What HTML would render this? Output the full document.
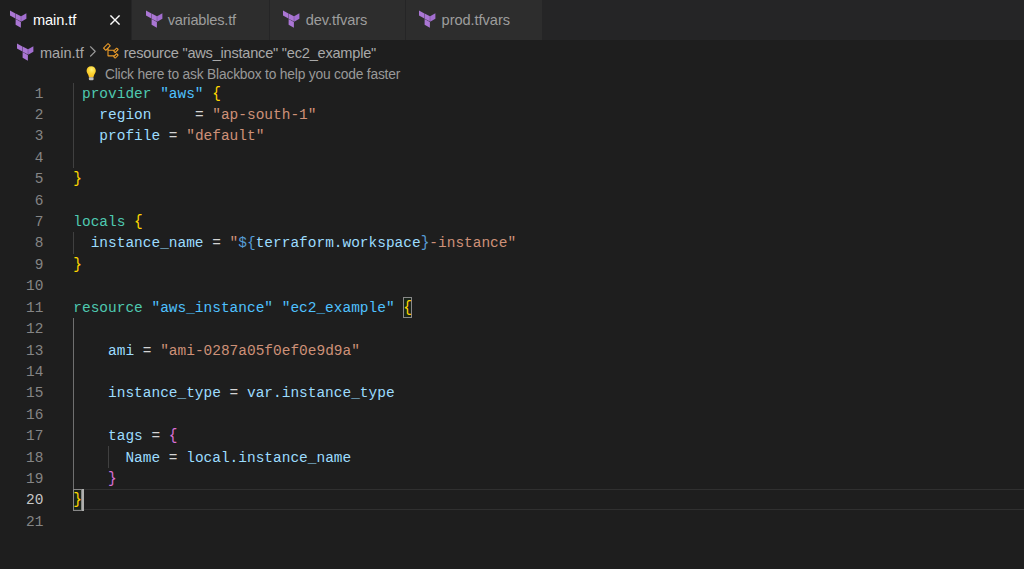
<!DOCTYPE html>
<html><head><meta charset="utf-8"><title>main.tf</title>
<style>
html,body{margin:0;padding:0;background:#1e1e1e;overflow:hidden}
body{width:1024px;height:569px;position:relative;font-family:"Liberation Sans",sans-serif;color:#ccc}
svg{position:absolute;overflow:visible}
.tabs{position:absolute;left:0;top:0;width:1024px;height:39.6px;background:#252526}
.tab{position:absolute;top:0;height:39.6px;background:#2d2d2d}
.tab.active{background:#1e1e1e}
.ui{position:absolute;white-space:nowrap;font-size:14.6px;line-height:20px;height:20px}
.tl{color:#9d9d9d;top:10px}
.tl.on{color:#fff}
.bc{color:#a9a9a9;top:42.5px}
.lens{color:#999;top:64.7px;font-size:13.8px;letter-spacing:-0.2px}
.code{position:absolute;left:0;top:0;width:1024px;font-family:"Liberation Mono",monospace;font-size:14.47px;color:#d4d4d4}
.ln{position:absolute;left:0;height:21.4px;line-height:21.4px;width:1024px;white-space:pre}
.ln .n{position:absolute;left:0;top:0;width:43.4px;text-align:right;color:#858585}
.ln.cur .n{color:#c6c6c6}
.ln .t{position:absolute;left:73.3px;top:0}
.k{color:#4ec9b0}.s{color:#ce9178}.b{color:#4fc1ff}.v{color:#9cdcfe}.y{color:#ffd700}.m{color:#da70d6}.o{color:#d4d4d4}.bl{color:#569cd6}
.br{display:inline-block;transform:translateY(0.2px) scaleY(1.2);transform-origin:50% 60%}
.g{position:absolute;width:1px;background:#404040}
.g.a{background:#707070}
.curline{position:absolute;left:73px;top:489px;width:951px;height:19.4px;border-top:1px solid #303030;border-bottom:1px solid #303030}
.bm{position:absolute;box-sizing:border-box;border:1px solid #888;background:rgba(0,100,0,0.1);width:9.2px;height:21.2px}
.cursor{position:absolute;left:81.5px;top:488.8px;width:2.4px;height:21.8px;background:#aeafad}
</style></head><body>
<div class="tabs">
<div class="tab active" style="left:0;width:131px"></div>
<div class="tab" style="left:132px;width:137px"></div>
<div class="tab" style="left:270px;width:134.5px"></div>
<div class="tab" style="left:405.5px;width:136.4px"></div>
</div>
<svg class="tf" style="left:10px;top:10px" width="18" height="19" viewBox="0 0 18 19"><polygon points="0,0.5 5.4,3.4 5.4,8.5 0,5.5" fill="#aa76d4"/><polygon points="5.6,3.5 10.9,6.3 10.9,11.5 5.6,8.7" fill="#aa76d4"/><polygon points="11.1,6.3 16.4,3.3 16.4,8.8 11.1,11.7" fill="#a26ed0"/><polygon points="5.6,9 10.9,12 10.9,17.8 5.6,14.8" fill="#aa76d4"/></svg><svg class="tf" style="left:145.5px;top:10px" width="18" height="19" viewBox="0 0 18 19"><polygon points="0,0.5 5.4,3.4 5.4,8.5 0,5.5" fill="#aa76d4"/><polygon points="5.6,3.5 10.9,6.3 10.9,11.5 5.6,8.7" fill="#aa76d4"/><polygon points="11.1,6.3 16.4,3.3 16.4,8.8 11.1,11.7" fill="#a26ed0"/><polygon points="5.6,9 10.9,12 10.9,17.8 5.6,14.8" fill="#aa76d4"/></svg><svg class="tf" style="left:283.4px;top:10px" width="18" height="19" viewBox="0 0 18 19"><polygon points="0,0.5 5.4,3.4 5.4,8.5 0,5.5" fill="#aa76d4"/><polygon points="5.6,3.5 10.9,6.3 10.9,11.5 5.6,8.7" fill="#aa76d4"/><polygon points="11.1,6.3 16.4,3.3 16.4,8.8 11.1,11.7" fill="#a26ed0"/><polygon points="5.6,9 10.9,12 10.9,17.8 5.6,14.8" fill="#aa76d4"/></svg><svg class="tf" style="left:418.6px;top:10px" width="18" height="19" viewBox="0 0 18 19"><polygon points="0,0.5 5.4,3.4 5.4,8.5 0,5.5" fill="#aa76d4"/><polygon points="5.6,3.5 10.9,6.3 10.9,11.5 5.6,8.7" fill="#aa76d4"/><polygon points="11.1,6.3 16.4,3.3 16.4,8.8 11.1,11.7" fill="#a26ed0"/><polygon points="5.6,9 10.9,12 10.9,17.8 5.6,14.8" fill="#aa76d4"/></svg><svg class="tf" style="left:17px;top:42.6px" width="18" height="19" viewBox="0 0 18 19"><polygon points="0,0.5 5.4,3.4 5.4,8.5 0,5.5" fill="#aa76d4"/><polygon points="5.6,3.5 10.9,6.3 10.9,11.5 5.6,8.7" fill="#aa76d4"/><polygon points="11.1,6.3 16.4,3.3 16.4,8.8 11.1,11.7" fill="#a26ed0"/><polygon points="5.6,9 10.9,12 10.9,17.8 5.6,14.8" fill="#aa76d4"/></svg>
<div class="ui tl on" id="t1" style="left:33px;letter-spacing:-0.1px">main.tf</div>
<div class="ui tl" id="t2" style="left:167.7px;letter-spacing:-0.2px">variables.tf</div>
<div class="ui tl" id="t3" style="left:305.8px;letter-spacing:-0.08px">dev.tfvars</div>
<div class="ui tl" id="t4" style="left:441.6px;letter-spacing:-0.05px">prod.tfvars</div>
<svg style="left:105.9px;top:10.65px" width="18" height="18" viewBox="0 0 16 16"><path fill="#fff" stroke="#fff" stroke-width="0.25" d="M8 8.707l3.646 3.647.708-.707L8.707 8l3.647-3.646-.707-.708L8 7.293 4.354 3.646l-.707.708L7.293 8l-3.646 3.646.707.708L8 8.707z"/></svg>
<div class="ui bc" id="b1" style="left:39.9px">main.tf</div>
<svg style="left:83.8px;top:43px" width="16.8" height="16.8" viewBox="0 0 16 16"><path fill="#a6a6a6" stroke="#a6a6a6" stroke-width="0.3" d="M10.072 8.024L5.715 3.667l.618-.62L11 7.716v.618L6.333 13l-.618-.619 4.357-4.357z"/></svg>
<svg style="left:102.1px;top:42.2px" width="18" height="18" viewBox="0 0 16 16"><path fill="#ee9d28" d="M11.34 9.71h.71l2.67-2.67v-.71L13.38 5h-.7l-1.82 1.81h-5V5.56l1.86-1.85V3l-2-2H5L1 5v.71l2 2h.71l1.14-1.15v5.79l.5.5H10v.52l1.33 1.34h.71l2.67-2.67v-.71L13.37 10h-.7l-1.86 1.85h-5v-4H10v.48l1.34 1.38zm1.69-3.65l.63.63-2 2-.63-.63 2-2zm0 5l.63.63-2 2-.63-.63 2-2zM3.35 6.65l-1.29-1.3 3.29-3.29 1.3 1.29-3.3 3.3z"/></svg>
<div class="ui bc" id="b2" style="left:123.7px;letter-spacing:-0.23px">resource "aws_instance" "ec2_example"</div>
<svg style="left:86px;top:66px" width="11" height="15" viewBox="0 0 11 15"><defs><radialGradient id="bg" cx="0.55" cy="0.3" r="0.7"><stop offset="0" stop-color="#fff27a"/><stop offset="0.5" stop-color="#fcd535"/><stop offset="1" stop-color="#f9bc22"/></radialGradient></defs><path fill="url(#bg)" d="M5.2 0.3C2.4 0.3 0.6 2.3 0.6 4.8c0 1.9 1.1 3 1.7 4.2c0.4 0.8 0.5 1.6 0.6 2.4h4.6c0.1-0.8 0.2-1.6 0.6-2.4c0.6-1.2 1.7-2.3 1.7-4.2C9.8 2.3 8 0.3 5.2 0.3z"/><rect x="2.8" y="11.3" width="4.8" height="2.9" rx="1.2" fill="#bdbdbd"/></svg>
<div class="ui lens" id="l1" style="left:104.9px">Click here to ask Blackbox to help you code faster</div>
<div class="g" style="left:73px;top:82.5px;height:85.6px"></div>
<div class="g" style="left:73px;top:232.3px;height:21.4px"></div>
<div class="g a" style="left:73px;top:317.9px;height:171.2px"></div>
<div class="g" style="left:107.7px;top:446.3px;height:21.4px"></div>
<div class="curline"></div>
<div class="bm" style="left:403px;top:296.6px"></div>
<div class="bm" style="left:72.8px;top:488.8px;height:21.8px"></div>
<div class="code">
<div class="ln" style="top:84.00px"><span class="n">1</span><span class="t"><span class="o"> </span><span class="k">provider</span><span class="o"> </span><span class="b">"aws"</span><span class="o"> </span><span class="y br">{</span></span></div>
<div class="ln" style="top:105.00px"><span class="n">2</span><span class="t"><span class="o">   </span><span class="v">region</span><span class="o">     = </span><span class="s">"ap-south-1"</span></span></div>
<div class="ln" style="top:126.00px"><span class="n">3</span><span class="t"><span class="o">   </span><span class="v">profile</span><span class="o"> = </span><span class="s">"default"</span></span></div>
<div class="ln" style="top:148.00px"><span class="n">4</span><span class="t"></span></div>
<div class="ln" style="top:169.00px"><span class="n">5</span><span class="t"><span class="y br">}</span></span></div>
<div class="ln" style="top:191.00px"><span class="n">6</span><span class="t"></span></div>
<div class="ln" style="top:212.00px"><span class="n">7</span><span class="t"><span class="k">locals</span><span class="o"> </span><span class="y br">{</span></span></div>
<div class="ln" style="top:233.00px"><span class="n">8</span><span class="t"><span class="o">  </span><span class="v">instance_name</span><span class="o"> = </span><span class="s">"</span><span class="bl">${</span><span class="v">terraform.workspace</span><span class="bl br">}</span><span class="s">-instance"</span></span></div>
<div class="ln" style="top:255.00px"><span class="n">9</span><span class="t"><span class="y br">}</span></span></div>
<div class="ln" style="top:276.00px"><span class="n">10</span><span class="t"></span></div>
<div class="ln" style="top:298.00px"><span class="n">11</span><span class="t"><span class="k">resource</span><span class="o"> </span><span class="b">"aws_instance"</span><span class="o"> </span><span class="b">"ec2_example"</span><span class="o"> </span><span class="y br">{</span></span></div>
<div class="ln" style="top:319.00px"><span class="n">12</span><span class="t"></span></div>
<div class="ln" style="top:341.00px"><span class="n">13</span><span class="t"><span class="o">    </span><span class="v">ami</span><span class="o"> = </span><span class="s">"ami-0287a05f0ef0e9d9a"</span></span></div>
<div class="ln" style="top:362.00px"><span class="n">14</span><span class="t"></span></div>
<div class="ln" style="top:383.00px"><span class="n">15</span><span class="t"><span class="o">    </span><span class="v">instance_type</span><span class="o"> = </span><span class="v">var.instance_type</span></span></div>
<div class="ln" style="top:405.00px"><span class="n">16</span><span class="t"></span></div>
<div class="ln" style="top:426.00px"><span class="n">17</span><span class="t"><span class="o">    </span><span class="v">tags</span><span class="o"> = </span><span class="m br">{</span></span></div>
<div class="ln" style="top:448.00px"><span class="n">18</span><span class="t"><span class="o">      </span><span class="v">Name</span><span class="o"> = </span><span class="v">local.instance_name</span></span></div>
<div class="ln" style="top:469.00px"><span class="n">19</span><span class="t"><span class="o">    </span><span class="m br">}</span></span></div>
<div class="ln cur" style="top:490.00px"><span class="n">20</span><span class="t"><span class="y br">}</span></span></div>
<div class="ln" style="top:512.00px"><span class="n">21</span><span class="t"></span></div>
</div>
<div class="cursor"></div>
</body></html>
